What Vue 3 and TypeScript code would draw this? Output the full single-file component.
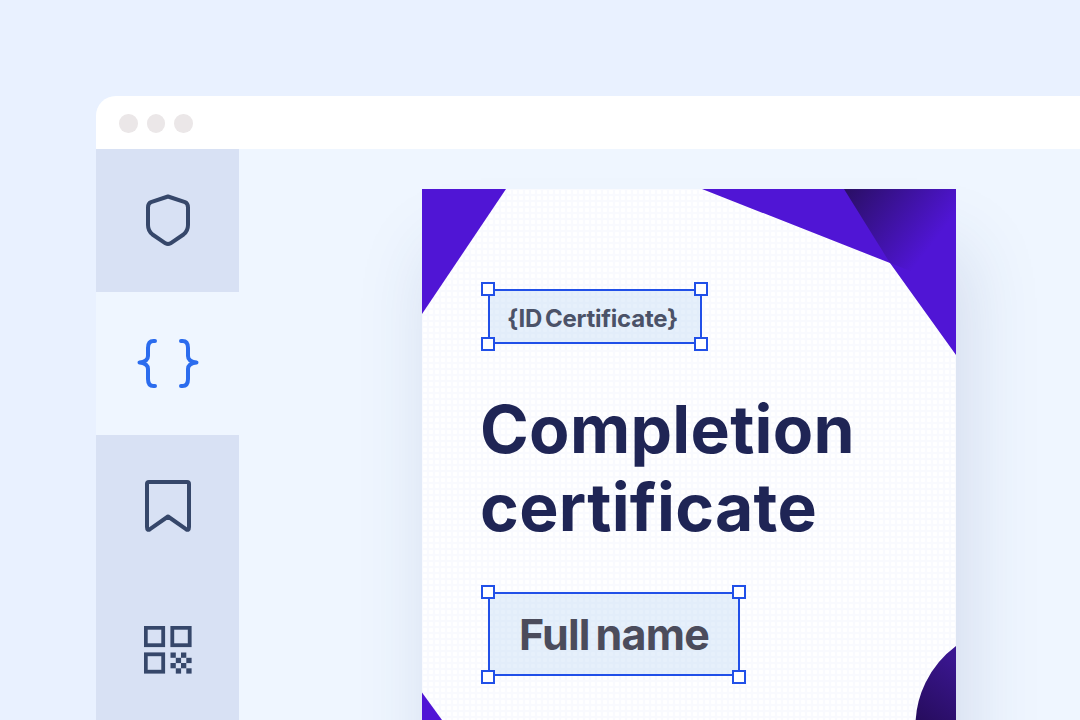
<script setup lang="ts">
const handles = ['tl', 'tr', 'bl', 'br']
</script>

<template>
  <div class="page">
    <div class="window">
      <header class="bar">
        <span class="dot"></span><span class="dot"></span><span class="dot"></span>
      </header>
      <div class="body">
        <nav class="side">
          <div class="item">
            <svg class="shield" width="48" height="56" viewBox="0 0 48 56" fill="none" stroke="#36476a" stroke-width="4" stroke-linejoin="round" stroke-linecap="round">
              <path d="M24 2.500 L41 8.200 Q44 9.400 44 13.500 V31 Q44 37 39.500 40.500 L26.500 49.300 Q24 50.800 21.500 49.300 L8.500 40.500 Q4 37 4 31 V13.500 Q4 9.400 7 8.200 Z" />
            </svg>
          </div>
          <div class="item active">
            <svg width="64" height="52" viewBox="0 0 64 52" fill="none" stroke="#2b6cee" stroke-width="4" stroke-linecap="round" stroke-linejoin="round">
              <path d="M19 3 H17.500 Q12 3 12 10 V18 Q12 23.500 3.500 24.500 Q12 25.500 12 31 V41 Q12 48 17.500 48 H19" />
              <path d="M45 3 H46.500 Q52 3 52 10 V18 Q52 23.500 60.500 24.500 Q52 25.500 52 31 V41 Q52 48 46.500 48 H45" />
            </svg>
          </div>
          <div class="item">
            <svg width="48" height="56" viewBox="0 0 48 56" fill="none" stroke="#36476a" stroke-width="4" stroke-linejoin="round" stroke-linecap="round">
              <path d="M5 3 H43 Q45 3 45 5 V48 Q45 52 42 50.200 L24 37.500 L6 50.200 Q3 52 3 48 V5 Q3 3 5 3 Z" />
            </svg>
          </div>
          <div class="item">
            <svg width="48" height="48" viewBox="0 0 48 48" fill="none">
              <g stroke="#36476a" stroke-width="3.800">
                <rect x="1.800" y="1.800" width="17.400" height="17.400" />
                <rect x="28.300" y="1.800" width="17.400" height="17.400" />
                <rect x="1.800" y="28.300" width="17.400" height="17.400" />
              </g>
              <g fill="#36476a">
                <rect x="26.500" y="26.500" width="5.300" height="5.300" />
                <rect x="37" y="26.500" width="5.300" height="5.300" />
                <rect x="31.800" y="31.800" width="5.300" height="5.300" />
                <rect x="42.300" y="31.800" width="5.300" height="5.300" />
                <rect x="26.500" y="37" width="5.300" height="5.300" />
                <rect x="37" y="37" width="5.300" height="5.300" />
                <rect x="31.800" y="42.300" width="5.300" height="5.300" />
                <rect x="42.300" y="42.300" width="5.300" height="5.300" />
              </g>
            </svg>
          </div>
        </nav>
        <main class="main">
          <article class="paper">
            <svg class="art" width="534" height="540" viewBox="0 0 534 540">
              <defs>
                <linearGradient id="fold" x1="425" y1="0" x2="505" y2="62" gradientUnits="userSpaceOnUse">
                  <stop offset="0" stop-color="#2a0f66" />
                  <stop offset="1" stop-color="#5015d5" />
                </linearGradient>
                <linearGradient id="disc" x1="490" y1="530" x2="534" y2="470" gradientUnits="userSpaceOnUse">
                  <stop offset="0" stop-color="#260c5c" />
                  <stop offset="1" stop-color="#3a1690" />
                </linearGradient>
              </defs>
              <path d="M0 0 H84 L0 125 Z" fill="#5015d5" />
              <path d="M280 0 H534 V166 L468 74 Z" fill="#5015d5" />
              <path d="M422 0 H534 V100 L468 74 Z" fill="url(#fold)" />
              <path d="M0 503.500 L20 531 H0 Z" fill="#5015d5" />
              <path d="M534 457 A100 100 0 0 0 493.500 540 L493.500 531 H534 Z" fill="url(#disc)" />
            </svg>
            <div class="field small">
              <span v-for="h in handles" :key="h" class="handle" :class="h"></span>
              {ID Certificate}
            </div>
            <h1 class="title">Completion<br />certificate</h1>
            <div class="field large">
              <span v-for="h in handles" :key="h" class="handle" :class="h"></span>
              Full name
            </div>
          </article>
        </main>
      </div>
    </div>
  </div>
</template>

<style>
html, body { margin: 0; overflow: hidden; }
</style>

<style scoped>
.page {
  width: 1080px;
  height: 720px;
  box-sizing: border-box;
  padding: 96px 0 0 96px;
  background: #e9f1ff;
  overflow: hidden;
  font-family: Inter, "Liberation Sans", sans-serif;
}
.window {
  width: 984px;
  height: 624px;
  display: flex;
  flex-direction: column;
  border-radius: 20px 0 0 0;
  overflow: hidden;
  background: #eff6ff;
}
.bar {
  height: 53px;
  flex: none;
  box-sizing: border-box;
  background: #fff;
  display: flex;
  align-items: center;
  gap: 9px;
  padding: 2px 0 0 23px;
}
.dot {
  width: 18.500px;
  height: 18.500px;
  border-radius: 50%;
  background: #ebe7e8;
}
.body {
  flex: 1;
  display: flex;
  min-height: 0;
}
.side {
  width: 143px;
  flex: none;
  display: flex;
  flex-direction: column;
}
.item {
  height: 143px;
  flex: none;
  display: flex;
  align-items: center;
  justify-content: center;
  background: #d8e1f4;
}
.item.active { background: #eff6ff; }
.shield { margin-top: 2px; }
.main {
  flex: 1;
  padding: 40px 0 0 183px;
  min-width: 0;
}
.paper {
  position: relative;
  width: 534px;
  height: 620px;
  box-sizing: border-box;
  padding: 100px 0 0 60px;
  background-color: #f9fafe;
  background-image: radial-gradient(circle, #ffffff 2px, transparent 2.500px);
  background-size: 6px 6px;
  box-shadow: 10px 60px 70px rgba(50, 70, 130, 0.15);
}
.art {
  position: absolute;
  left: 0;
  top: 0;
  display: block;
}
.field {
  position: relative;
  margin-left: 6px;
  box-sizing: border-box;
  display: flex;
  align-items: center;
  justify-content: center;
  border: 2px solid #2150e8;
  background: rgba(190, 215, 245, 0.38);
  font-weight: 700;
}
.field.small {
  width: 214px;
  height: 55px;
  padding: 3px 5px 0 0;
  color: #4b5268;
  font-size: 24px;
  letter-spacing: -0.250px;
  word-spacing: -2.500px;
}
.field.large {
  width: 252px;
  height: 84px;
  margin-top: 46px;
  color: #4b4c5c;
  font-size: 43px;
  letter-spacing: -0.800px;
  word-spacing: -3.500px;
}
.handle {
  position: absolute;
  width: 14px;
  height: 14px;
  box-sizing: border-box;
  border: 2.500px solid #2150e8;
  background: #fff;
}
.handle.tl { left: -9px; top: -9px; }
.handle.tr { right: -8px; top: -9px; }
.handle.bl { left: -9px; bottom: -9px; }
.handle.br { right: -8px; bottom: -9px; }
.field.large .handle.bl, .field.large .handle.br { bottom: -10px; }
.title {
  position: relative;
  margin: 46px 0 0 -2px;
  color: #1f2555;
  font-size: 66px;
  line-height: 78px;
  font-weight: 700;
  letter-spacing: 0.300px;
}
</style>
